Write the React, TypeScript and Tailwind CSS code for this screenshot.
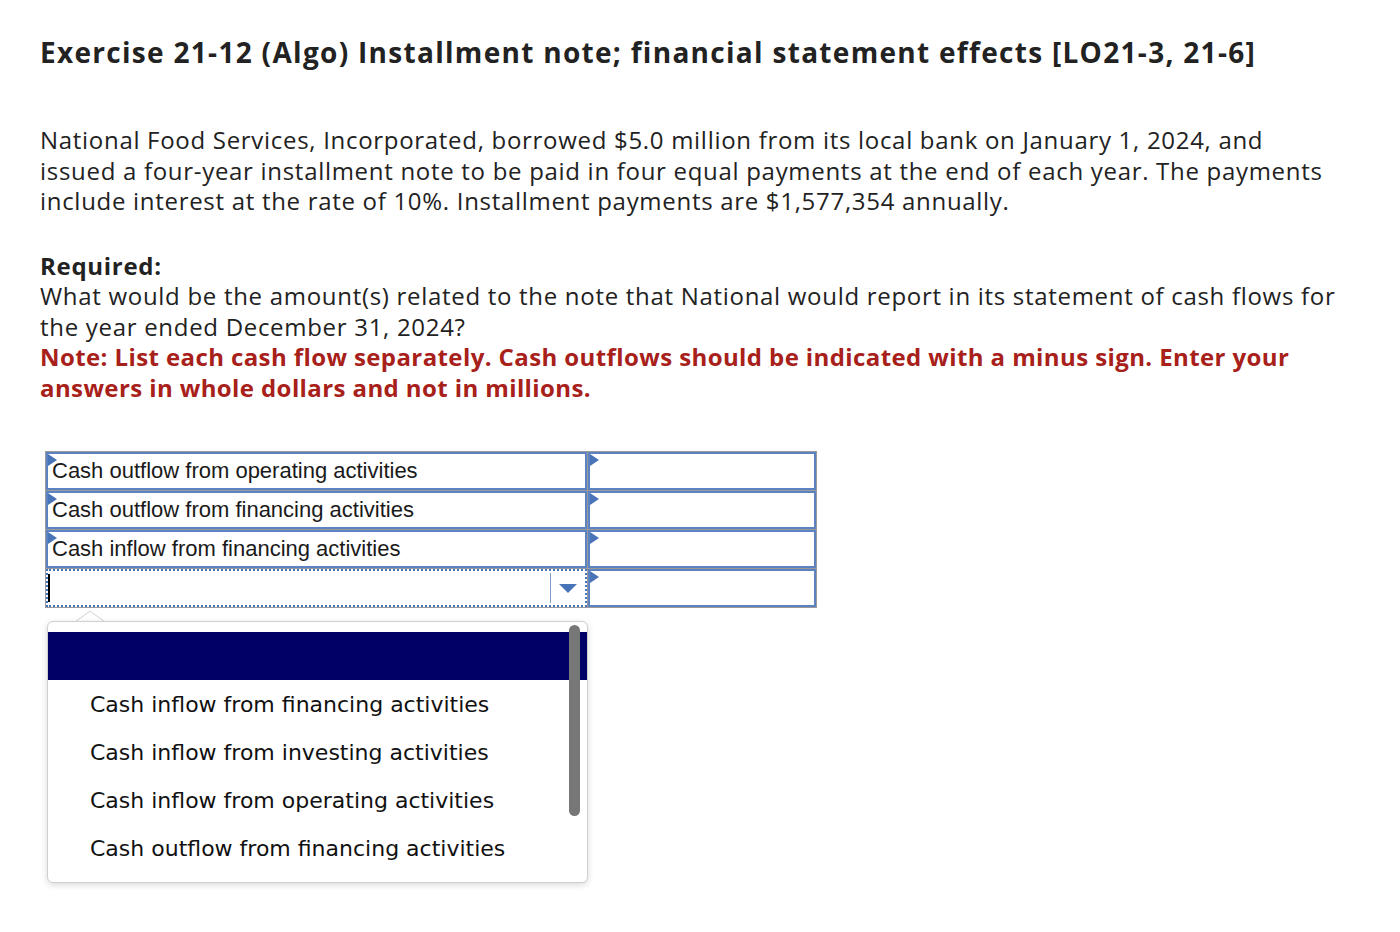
import React from "react";

const rows = [
  "Cash outflow from operating activities",
  "Cash outflow from financing activities",
  "Cash inflow from financing activities",
];

const options = [
  "Cash inflow from financing activities",
  "Cash inflow from investing activities",
  "Cash inflow from operating activities",
  "Cash outflow from financing activities",
];

function Flag() {
  return (
    <svg className="absolute left-0 top-0" width="9" height="12" viewBox="0 0 9 12">
      <path d="M0 0 L9 6 L0 12 Z" fill="#4a74b8" />
    </svg>
  );
}

function Cell({ children }: { children?: React.ReactNode }) {
  return (
    <td className="border border-[#9a9a9a] p-0">
      <div className="relative h-[38px] border-2 border-[#5c82c2] bg-white">
        <Flag />
        {children}
      </div>
    </td>
  );
}

export default function App() {
  return (
    <div
      className="min-h-screen bg-white px-[40px] pt-[34px] text-[#222]"
      style={{ fontFamily: "'Open Sans', 'Liberation Sans', sans-serif" }}
    >
      <h1 className="text-[28px] font-bold leading-[36px] tracking-[1.3px] text-[#222]">
        Exercise 21-12 (Algo) Installment note; financial statement effects [LO21-3, 21-6]
      </h1>

      <p className="mt-[55px] w-[1300px] text-[24px] leading-[30.5px] tracking-[0.7px]">
        National Food Services, Incorporated, borrowed $5.0 million from its local bank on January 1, 2024, and
        issued a four-year installment note to be paid in four equal payments at the end of each year. The payments
        include interest at the rate of 10%. Installment payments are $1,577,354 annually.
      </p>

      <div className="mt-[34px] w-[1300px] text-[24px] leading-[30.5px] tracking-[0.7px]">
        <p className="font-bold">Required:</p>
        <p>
          What would be the amount(s) related to the note that National would report in its statement of cash flows for
          the year ended December 31, 2024?
        </p>
        <p className="font-bold tracking-[0.4px] text-[#a8201a]">
          Note: List each cash flow separately. Cash outflows should be indicated with a minus sign. Enter your answers
          in whole dollars and not in millions.
        </p>
      </div>

      <div className="relative mt-[48px] ml-[5px] w-[772px]">
        <table
          className="w-full border-collapse border border-[#9a9a9a]"
          style={{ fontFamily: "'Liberation Sans', Arial, sans-serif" }}
        >
          <colgroup>
            <col className="w-[542px]" />
            <col />
          </colgroup>
          <tbody>
            {rows.map((r) => (
              <tr key={r}>
                <Cell>
                  <span className="block pl-[4px] text-[22px] leading-[34px] text-[#1a1a1a]">{r}</span>
                </Cell>
                <Cell />
              </tr>
            ))}
            <tr>
              <td className="border border-[#9a9a9a] p-0">
                <div className="relative flex h-[38px] items-center border-2 border-dotted border-[#4a74b8] bg-white">
                  <div className="ml-0 h-[28px] w-[2px] bg-black" />
                  <div className="flex-1" />
                  <div className="h-[30px] w-px bg-[#7d9ccd]" />
                  <svg className="mx-[8px]" width="18" height="9" viewBox="0 0 18 9">
                    <path d="M0 0 L18 0 L9 9 Z" fill="#4a74b8" />
                  </svg>
                </div>
              </td>
              <Cell />
            </tr>
          </tbody>
        </table>

        <div className="absolute left-[2px] top-[170px] w-[541px]">
          <svg className="absolute left-[28px] top-[-10px]" width="30" height="11" viewBox="0 0 30 11">
            <path d="M0 11 L15 0 L30 11" fill="white" stroke="#d0d0d0" strokeWidth="1" />
          </svg>
          <div
            className="relative h-[262px] overflow-hidden rounded-[6px] border border-[#cfcfcf] bg-white pt-[10px] shadow-[0_2px_6px_rgba(0,0,0,0.15)]"
            style={{ fontFamily: "'DejaVu Sans', Verdana, sans-serif" }}
          >
            <div className="h-[48px] bg-[#000066]" />
            {options.map((o) => (
              <div key={o} className="flex h-[48px] items-center pl-[42px] text-[22px] text-[#111]">
                {o}
              </div>
            ))}
            <div className="absolute right-[7px] top-[3px] h-[191px] w-[11px] rounded-full bg-[#777]" />
          </div>
        </div>
      </div>
    </div>
  );
}
